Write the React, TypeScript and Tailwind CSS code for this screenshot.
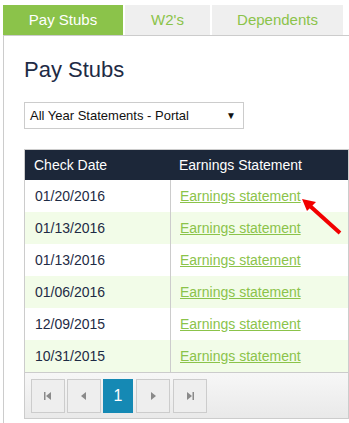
import { useState } from "react";

const rows = [
  "01/20/2016",
  "01/13/2016",
  "01/13/2016",
  "01/06/2016",
  "12/09/2015",
  "10/31/2015",
];

const tabs = [
  { label: "Pay Stubs", w: "w-[120px]" },
  { label: "W2's", w: "w-[85px]" },
  { label: "Dependents", w: "w-[131px]" },
];

const PagerIcon = ({ kind }: { kind: "first" | "prev" | "next" | "last" }) => (
  <svg width="10" height="8" viewBox="0 0 10 8" fill="#8a8a8a">
    {kind === "first" && (
      <>
        <rect x="1" y="0" width="1.5" height="8" />
        <polygon points="8,0 8,8 3,4" />
      </>
    )}
    {kind === "prev" && <polygon points="7,0 7,8 2,4" />}
    {kind === "next" && <polygon points="3,0 3,8 8,4" />}
    {kind === "last" && (
      <>
        <polygon points="2,0 2,8 7,4" />
        <rect x="7.5" y="0" width="1.5" height="8" />
      </>
    )}
  </svg>
);

export default function App() {
  const [active, setActive] = useState(0);

  return (
    <div className="relative h-[423px] w-[349px] overflow-hidden bg-white font-['Liberation_Sans',Arial,sans-serif] text-[#1e2b45]">
      <div className="ml-[3px] mt-[5px] flex gap-[2px]">
        {tabs.map((t, i) => (
          <button
            key={t.label}
            onClick={() => setActive(i)}
            className={`${t.w} h-[30px] text-[15px] ${
              i === active ? "bg-[#8bc34a] text-white" : "bg-[#efefef] text-[#8bc34a]"
            }`}
          >
            {t.label}
          </button>
        ))}
      </div>

      <div className="ml-[3px] h-[400px] border-l border-t border-[#cccccc] pl-5">
        <h1 className="mt-[21px] text-[22px] leading-[26px]">Pay Stubs</h1>

        <div className="mt-[19px] flex h-[27px] w-[220px] items-center justify-between border border-[#cccccc] pl-[5px] pr-[7px] text-[13px] text-[#111]">
          <span>All Year Statements - Portal</span>
          <span className="text-[10px]">▼</span>
        </div>

        <div className="mt-[20px] w-[325px] border border-[#cccccc]">
          <div className="flex h-[30px] items-center bg-[#1c2739] text-[14px] text-white">
            <div className="w-[146px] px-[9px]">Check Date</div>
            <div className="px-[8px]">Earnings Statement</div>
          </div>
          {rows.map((d, i) => (
            <div
              key={i}
              className={`flex h-[32px] items-center text-[14px] ${
                i % 2 === 1 ? "bg-[#f2fce8]" : "bg-white"
              }`}
            >
              <div className="flex h-full w-[146px] items-center border-r border-[#cccccc] px-[10px]">{d}</div>
              <a href="#" className="pl-[9px] text-[#8bc34a] underline">
                Earnings statement
              </a>
            </div>
          ))}
          <div className="flex h-[46px] gap-[2px] border-t border-[#cccccc] bg-gradient-to-b from-[#f7f7f7] to-[#e9e9e9] pl-[6px] pt-[6px]">
            <button className="flex h-[34px] w-[34px] items-center justify-center border border-[#cccccc] bg-[#eeeeee]">
              <PagerIcon kind="first" />
            </button>
            <button className="flex h-[34px] w-[34px] items-center justify-center border border-[#cccccc] bg-[#eeeeee]">
              <PagerIcon kind="prev" />
            </button>
            <button className="h-[34px] w-[30px] bg-[#1589b4] text-[16px] text-white">1</button>
            <button className="ml-[1px] flex h-[34px] w-[34px] items-center justify-center border border-[#cccccc] bg-[#eeeeee]">
              <PagerIcon kind="next" />
            </button>
            <button className="ml-[1px] flex h-[34px] w-[34px] items-center justify-center border border-[#cccccc] bg-[#eeeeee]">
              <PagerIcon kind="last" />
            </button>
          </div>
        </div>
      </div>

      <svg className="pointer-events-none absolute left-0 top-0" width="349" height="423">
        <line x1="340" y1="233" x2="310" y2="206" stroke="#f20000" strokeWidth="4" />
        <polygon points="302,199 316,202 307,211" fill="#f20000" />
      </svg>
    </div>
  );
}
